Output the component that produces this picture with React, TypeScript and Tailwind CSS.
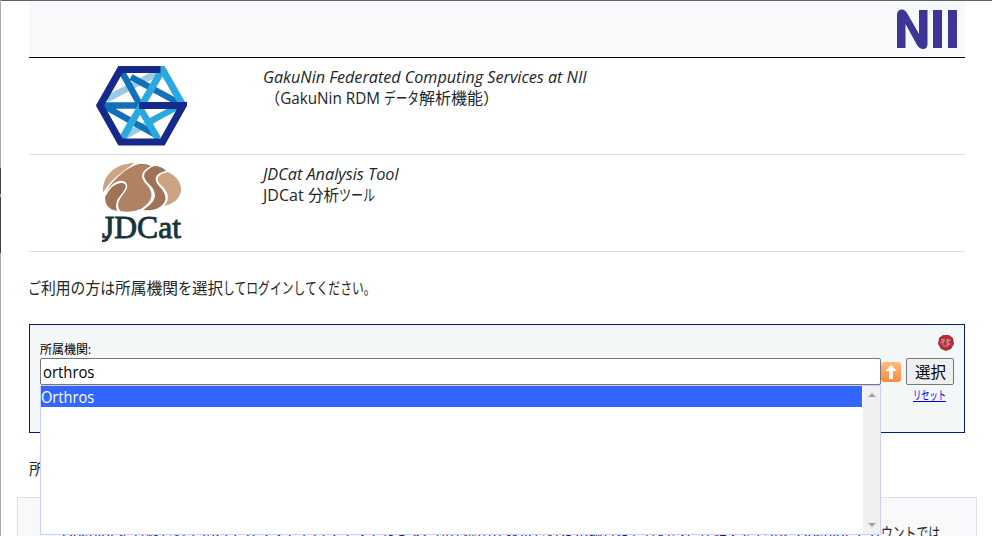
import { useLayoutEffect, useRef, useState } from "react";

const UI = "font-['Open_Sans','Noto_Sans_CJK_JP',sans-serif]";

// Text condensed or widened horizontally to occupy a given width.
function Fit({ text, width, className = "" }: { text: string; width: number; className?: string }) {
  const ref = useRef<HTMLSpanElement>(null);
  const [scale, setScale] = useState(1);
  useLayoutEffect(() => {
    if (ref.current) setScale(width / ref.current.offsetWidth);
  }, [text, width]);
  return (
    <span className={`block shrink-0 whitespace-pre ${className}`} style={{ width }}>
      <span ref={ref} className="inline-block origin-left" style={{ transform: `scaleX(${scale})` }}>
        {text}
      </span>
    </span>
  );
}

function HexLogo() {
  return (
    <svg viewBox="8 6 91 80" className="h-20 w-[91px]" fill="none" strokeWidth="6.5">
      <path d="M19 39 69 13M37 76 66 60" stroke="#9acbe3" />
      <path d="M15 45.5H52M34 12 51 43M43 17 89 42M18 47 68 75" stroke="#1070b8" />
      <path d="M61 62 89 47M52 48 70 79" stroke="#2aa9e0" />
      <path d="M95 45.5 74.5 9.5 34 79" stroke="#2aa9e0" strokeWidth="7" />
      <path d="M72.5 9.5H32.5L12 45.5 32.5 82H74.5L95 45.5H51" stroke="#15298b" strokeWidth="7.2" />
    </svg>
  );
}

function JdcatLogo() {
  return (
    <svg viewBox="0 0 80 80" className="h-20 w-20 overflow-visible">
      <path d="M1 30C0 14 11 1 32 0C29 3 21 8 13 15C7 20 4 25 1 30Z" fill="#cca483" />
      <path d="M3 31C10 17 25 4 37 1Q43 0 49 3C39 8 37 14 45 22C53 31 50 39 39 46Q29 50 18 48C14 41 17 36 23 29C28 22 24 17 17 18Q9 20 3 31Z" fill="#b08263" />
      <path d="M3 34Q11 19 20 20C27 21 23 27 18 33Q12 40 15 48Q3 46 3 34Z" fill="#a07355" />
      <path d="M52 3Q60 3 64 8C53 10 51 16 57 23C66 32 66 41 54 46Q49 48 41 47C52 40 57 33 49 23C39 14 40 9 52 3Z" fill="#a07355" />
      <path d="M66 9C76 14 80 21 79 29Q76 40 62 43C68 37 67 30 60 23C52 16 56 11 66 9Z" fill="#cca483" />
      <path d="M7 72Q6 78 0 78" fill="none" stroke="#183439" strokeWidth="2.5" />
      <text x="0" y="75" textLength="79" lengthAdjust="spacingAndGlyphs" fill="#183439" stroke="#183439" strokeWidth=".9" className="font-['Liberation_Serif',serif] text-[32px]">JDCat</text>
    </svg>
  );
}

function Service({ logo, children }: { logo: React.ReactNode; children: React.ReactNode }) {
  return (
    <div className="flex h-[97px] border-b border-[#dee0e2]">
      <div className="flex w-[234px] items-start pl-[67px] pt-2">{logo}</div>
      <div className="pt-[9px] leading-[21px]">{children}</div>
    </div>
  );
}

export default function App() {
  return (
    <div className={`flex h-[536px] overflow-hidden bg-white text-[16px] text-[#212529] ${UI}`}>
      <div className="flex w-px shrink-0 flex-col bg-[#aaa]">
        <div className="mt-[168px] h-[26px] bg-[#444]" />
        <div className="mt-[3px] h-[56px] bg-[#444]" />
      </div>
      <div className="w-[991px] border-t border-[#626267]">
        <div className="ml-7 w-[936px]">
          <header className="flex h-[57px] justify-end border-b border-black bg-[#f7f9fb] pr-2 pt-[8px]">
            <svg viewBox="0 0 60 40" className="h-10 w-[60px]" fill="#3d3696">
              <path d="M0 39V6Q0 .5 5 .5Q8 .5 10 4L22 25V1H30.500V35Q30.500 40 26 40Q22.500 40 20 36L8.500 15V39Z" />
              <path d="M36 1h9v38h-9zM51 1h9v38h-9z" />
            </svg>
          </header>
          <Service logo={<HexLogo />}>
            <Fit text="GakuNin Federated Computing Services at NII" width={324} className="italic" />
            <div className="flex pl-0.5">
              <Fit text="（GakuNin RDM " width={119} />
              <Fit text="データ" width={35} />
              <Fit text="解析機能）" width={80} />
            </div>
          </Service>
          <Service logo={<div className="pl-[6px]"><JdcatLogo /></div>}>
            <Fit text="JDCat Analysis Tool" width={136} className="italic" />
            <div className="flex">
              <Fit text="JDCat " width={45} />
              <Fit text="分析" width={31} />
              <Fit text="ツール" width={36} />
            </div>
          </Service>
          <div className="-ml-px mt-[24px] flex h-6 items-center">
            <Fit text="ご" width={13} />
            <Fit text="利用の方は" width={74} />
            <Fit text="所属機関" width={63} />
            <Fit text="を" width={14} />
            <Fit text="選択" width={31} />
            <Fit text="してログインしてください。" width={153} />
          </div>
          <div className="mt-[24px] h-[109px] border border-[#002080] bg-[#f3f7f8] px-2.5">
            <div className="flex h-[33px] justify-between">
              <Fit text="所属機関:" width={51} className="pt-[16px] text-[12px] leading-[18px] text-black" />
              <svg viewBox="0 0 16 16" className="mt-2.5 h-4 w-4">
                <path d="m5 0 6 0 4 3 1 6-3 5-5 2-5-2-3-5 1-6Z" fill="#ac3037" />
                <path d="m3 5 4-1M2 8l5-2M5 4v6M8 5l3-1M8 7l5-2M8 9h5M10 4v7M5 11h5" fill="none" stroke="#e1a5a7" strokeWidth=".8" />
              </svg>
            </div>
            <div className="flex">
              <div className="relative flex h-[27px] w-[841px] items-center rounded-[2px] border border-[#767676] bg-white pl-0.5 text-black">
                <Fit text="orthros" width={51} />
                <div className="absolute -left-px top-[26px] z-10 flex h-[150px] w-[841px] border border-[#ccf] bg-white">
                  <div className="mr-px flex-1">
                    <div className="flex h-[21px] items-center bg-[#36f] text-white">
                      <Fit text="Orthros" width={53} />
                    </div>
                  </div>
                  <div className="flex w-[17px] flex-col items-center justify-between bg-[#f0f0f0] pb-[7px] pt-[7px]">
                    <svg viewBox="0 0 8 4" className="h-1 w-2"><path d="M0 4 4 0 8 4Z" fill="#a3a3a3" /></svg>
                    <svg viewBox="0 0 8 4" className="h-1 w-2"><path d="M0 0h8L4 4Z" fill="#a3a3a3" /></svg>
                  </div>
                </div>
              </div>
              <svg viewBox="0 0 20 20" className="mt-1 h-5 w-5">
                <defs><linearGradient id="orange" x2="0" y2="1"><stop stopColor="#ffbd82" /><stop offset=".5" stopColor="#fca35b" /><stop offset="1" stopColor="#fb8a3e" /></linearGradient></defs>
                <rect width="20" height="20" rx="3" fill="url(#orange)" />
                <path d="M10 3 16 9H12V17H8V9H4Z" fill="white" />
              </svg>
              <div className="ml-[5px] w-12">
                <button className="flex h-[27px] w-12 items-center justify-center rounded-[2px] border border-[#767676] bg-[#efefef] text-black">
                  <Fit text="選択" width={31} />
                </button>
                <Fit text="リセット" width={33} className="ml-[7px] mt-0.5 text-[12px] leading-[18px] text-[#0000ee] [&>span]:underline" />
              </div>
            </div>
          </div>
          <div className="mt-6 h-6">
            <Fit text="所属機関" width={63} />
          </div>
        </div>
        <div className="ml-4 mt-4 flex h-[60px] w-[960px] border border-[#dee2e6] bg-[#f7f9fb] pl-11 pt-[23px]">
          <Fit text="OpenIdPに登録されているアカウントでログインできます。所属機関が表示されない場合は管理者へご連絡ください。OpenIdPアカ" width={819} />
          <Fit text="ウントでは" width={59} />
        </div>
      </div>
    </div>
  );
}
